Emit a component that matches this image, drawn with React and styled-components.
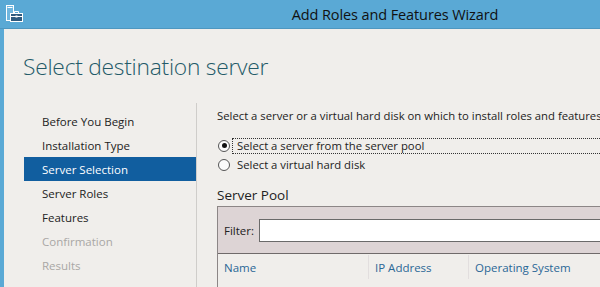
import React from "react";
import styled, { createGlobalStyle } from "styled-components";

const Global = createGlobalStyle`
  html, body { margin: 0; padding: 0; overflow: hidden; background: #f0eeeb; }
  body { font-family: "Open Sans", "Noto Sans", sans-serif; }
`;

const Window = styled.div`
  width: 790px;
  height: 287px;
  display: flex;
  flex-direction: column;
  background: #f0eeeb;
`;

const TitleBar = styled.div`
  height: 28px;
  flex: none;
  background: #5aa9d5;
  display: grid;
  grid-template-columns: 1fr auto 1fr;
  align-items: center;
  border-bottom: 1px solid #4e97c0;
`;

const IconSlot = styled.div`
  display: flex;
  align-items: center;
  padding-left: 5px;
`;

const Title = styled.div`
  font-size: 14.5px;
  color: #111;
  letter-spacing: -0.1px;
`;

const Frame = styled.div`
  flex: 1;
  display: flex;
  flex-direction: column;
  border-left: 4px solid #5aa9d5;
  padding-left: 20px;
  min-height: 0;
`;

const Header = styled.div`
  height: 74px;
  flex: none;
  display: flex;
  align-items: flex-start;
`;

const Heading = styled.h1`
  margin: 22px 0 0 -1px;
  font-weight: 300;
  font-size: 22.8px;
  color: #245a68;
  letter-spacing: -0.25px;
`;

const DestLabel = styled.div`
  margin: 38px 0 0 auto;
  width: 169px;
  font-size: 10px;
  color: #333;
`;

const Main = styled.div`
  flex: 1;
  display: flex;
  min-height: 0;
`;

const Sidebar = styled.ul`
  list-style: none;
  margin: 0;
  padding: 6px 0 0 0;
  width: 172px;
  flex: none;
  border-right: 1px solid #cfcdca;
`;

const NavItem = styled.li`
  height: 24px;
  display: flex;
  align-items: center;
  padding-left: 18px;
  font-size: 11.5px;
  color: ${(p) => (p.$active ? "#ffffff" : p.$disabled ? "#a9a7a5" : "#222")};
  background: ${(p) => (p.$active ? "#115e9f" : "transparent")};
`;

const Content = styled.div`
  flex: 1;
  padding: 5px 0 0 20px;
  display: flex;
  flex-direction: column;
`;

const Intro = styled.div`
  font-size: 11.3px;
  line-height: 16px;
  color: #222;
  white-space: nowrap;
`;

const RadioGroup = styled.div`
  margin-top: 12px;
  display: flex;
  flex-direction: column;
`;

const RadioRow = styled.div`
  height: 19px;
  display: flex;
  align-items: center;
`;

const RadioCircle = styled.span`
  width: 10px;
  height: 10px;
  border-radius: 50%;
  border: 1px solid #555;
  background: #fbfbfb;
  flex: none;
  margin-left: 1px;
  display: flex;
  align-items: center;
  justify-content: center;
  &::after {
    content: "";
    width: 5px;
    height: 5px;
    border-radius: 50%;
    background: ${(p) => (p.$checked ? "#111" : "transparent")};
  }
`;

const RadioLabel = styled.span`
  margin-left: 2px;
  padding: 0 3px 1px 4px;
  flex: ${(p) => (p.$focused ? 1 : "none")};
  font-size: 11.3px;
  line-height: 13px;
  color: #222;
  border: 1px dotted ${(p) => (p.$focused ? "#333" : "transparent")};
  white-space: nowrap;
`;

const SectionTitle = styled.div`
  margin-top: 12px;
  font-size: 13.5px;
  line-height: 18px;
  color: #222;
`;

const PoolBox = styled.div`
  margin-top: 2px;
  border: 1px solid #8c8686;
  border-bottom: none;
  flex: 1;
  display: flex;
  flex-direction: column;
`;

const FilterBar = styled.div`
  height: 46px;
  flex: none;
  background: #ddd4d5;
  border-bottom: 1px solid #6f6a6a;
  display: flex;
  align-items: center;
  padding-left: 6px;
`;

const FilterLabel = styled.span`
  font-size: 11.5px;
  color: #222;
  margin-right: 5px;
`;

const FilterInput = styled.div`
  flex: 1;
  height: 21px;
  background: #fff;
  border: 1px solid #6a6a6a;
  margin-right: 8px;
`;

const HeaderRow = styled.div`
  display: grid;
  grid-template-columns: 150px 100px 1fr;
  height: 24px;
  margin-top: 1px;
`;

const ColHead = styled.div`
  display: flex;
  align-items: center;
  padding-left: 6px;
  border-left: ${(p) => (p.$first ? "none" : "1px solid #e2dede")};
  font-size: 11.5px;
  color: #2a6796;
`;

function AppIcon() {
  return (
    <svg width="18" height="18" viewBox="0 0 18 18">
      <rect x="1.5" y="0.5" width="7" height="15" fill="#6fb6de" stroke="#ffffff" strokeWidth="1" />
      <rect x="2.5" y="2" width="5" height="1" fill="#ffffff" />
      <rect x="5.5" y="8.5" width="12" height="8" fill="#2f5a7e" stroke="#ffffff" strokeWidth="1" />
      <path d="M9.5 8.5 V6.5 H13.5 V8.5" fill="none" stroke="#ffffff" strokeWidth="1" />
      <rect x="5.5" y="11" width="12" height="1" fill="#ffffff" />
      <rect x="10.5" y="10.5" width="2" height="2" fill="#ffffff" />
    </svg>
  );
}

const navItems = [
  { label: "Before You Begin" },
  { label: "Installation Type" },
  { label: "Server Selection", active: true },
  { label: "Server Roles" },
  { label: "Features" },
  { label: "Confirmation", disabled: true },
  { label: "Results", disabled: true },
];

export default function App() {
  return (
    <>
      <Global />
      <Window>
        <TitleBar>
          <IconSlot>
            <AppIcon />
          </IconSlot>
          <Title>Add Roles and Features Wizard</Title>
          <div />
        </TitleBar>
        <Frame>
          <Header>
            <Heading>Select destination server</Heading>
            <DestLabel>DESTINATION SERVER</DestLabel>
          </Header>
          <Main>
            <Sidebar>
              {navItems.map((n) => (
                <NavItem key={n.label} $active={n.active} $disabled={n.disabled}>
                  {n.label}
                </NavItem>
              ))}
            </Sidebar>
            <Content>
              <Intro>
                Select a server or a virtual hard disk on which to install roles and features.
              </Intro>
              <RadioGroup>
                <RadioRow>
                  <RadioCircle $checked />
                  <RadioLabel $focused>Select a server from the server pool</RadioLabel>
                </RadioRow>
                <RadioRow>
                  <RadioCircle />
                  <RadioLabel>Select a virtual hard disk</RadioLabel>
                </RadioRow>
              </RadioGroup>
              <SectionTitle>Server Pool</SectionTitle>
              <PoolBox>
                <FilterBar>
                  <FilterLabel>Filter:</FilterLabel>
                  <FilterInput />
                </FilterBar>
                <HeaderRow>
                  <ColHead $first>Name</ColHead>
                  <ColHead>IP Address</ColHead>
                  <ColHead>Operating System</ColHead>
                </HeaderRow>
              </PoolBox>
            </Content>
          </Main>
        </Frame>
      </Window>
    </>
  );
}
